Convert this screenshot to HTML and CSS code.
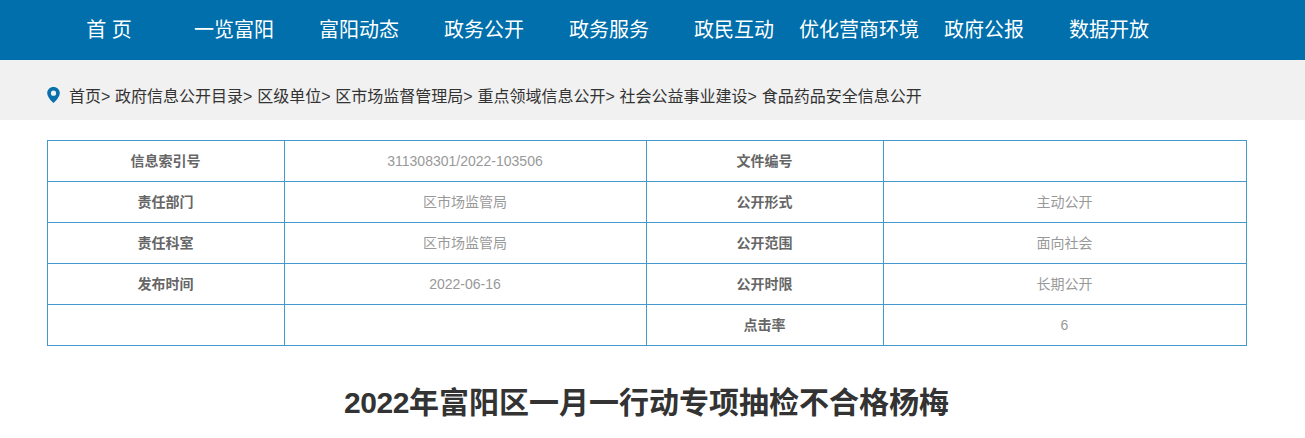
FILE: index.html
```html
<!DOCTYPE html>
<html lang="zh-CN">
<head>
<meta charset="utf-8">
<title>2022年富阳区一月一行动专项抽检不合格杨梅</title>
<link rel="stylesheet" href="styles.css">
</head>
<body>
<nav class="nav">
  <a class="nav-item">首&nbsp;页</a>
  <a class="nav-item">一览富阳</a>
  <a class="nav-item">富阳动态</a>
  <a class="nav-item">政务公开</a>
  <a class="nav-item">政务服务</a>
  <a class="nav-item">政民互动</a>
  <a class="nav-item">优化营商环境</a>
  <a class="nav-item">政府公报</a>
  <a class="nav-item">数据开放</a>
</nav>
<div class="crumbs">
  <svg class="pin" width="13" height="16" viewBox="0 0 13 16"><path fill="#0a70ab" fill-rule="evenodd" d="M6.500 0C2.900 0 .2 2.700.2 6.100c0 3.600 3.600 7.600 6.300 9.900 2.700-2.300 6.300-6.300 6.300-9.900C12.800 2.700 10.100 0 6.500 0zm0 3.600a2.600 2.600 0 1 1 0 5.200 2.600 2.600 0 0 1 0-5.200z"/></svg>
  <span class="crumb-text">首页&gt; 政府信息公开目录&gt; 区级单位&gt; 区市场监督管理局&gt; 重点领域信息公开&gt; 社会公益事业建设&gt; 食品药品安全信息公开</span>
</div>
<table class="info">
  <colgroup><col class="c1"><col class="c2"><col class="c3"><col class="c4"></colgroup>
  <tr><th>信息索引号</th><td class="num">311308301/2022-103506</td><th>文件编号</th><td></td></tr>
  <tr><th>责任部门</th><td>区市场监管局</td><th>公开形式</th><td>主动公开</td></tr>
  <tr><th>责任科室</th><td>区市场监管局</td><th>公开范围</th><td>面向社会</td></tr>
  <tr><th>发布时间</th><td class="num">2022-06-16</td><th>公开时限</th><td>长期公开</td></tr>
  <tr><th></th><td></td><th>点击率</th><td class="num">6</td></tr>
</table>
<h1 class="title"><span class="digits">2022</span>年富阳区一月一行动专项抽检不合格杨梅</h1>
</body>
</html>
```
FILE: styles.css
```css
* { box-sizing: border-box; }
html, body { margin: 0; padding: 0; height: 438px; overflow: hidden; }
body {
  background: #fff;
  font-family: "Liberation Sans", "Noto Sans CJK SC", sans-serif;
  color: #333;
}
.nav {
  display: flex;
  height: 60px;
  padding-left: 46.5px;
  background: #006fac;
}
.nav-item {
  width: 125px;
  line-height: 60px;
  text-align: center;
  font-size: 20px;
  color: #fff;
  white-space: nowrap;
}
.crumbs {
  display: flex;
  align-items: center;
  height: 60px;
  padding: 10px 0 0 47px;
  background: #f1f1f1;
}
.pin { flex: none; margin-right: 9px; }
.crumb-text { font-size: 16px; word-spacing: 0.33px; color: #333; white-space: nowrap; }
.info {
  width: 1199px;
  margin: 20px 0 0 47px;
  border-collapse: collapse;
  table-layout: fixed;
}
.c1, .c3 { width: 237px; }
.c2 { width: 362px; }
.c4 { width: 363px; }
.info th, .info td {
  height: 41px;
  padding: 0 1px 2px 0;
  border: 1px solid #4499cc;
  text-align: center;
  font-size: 14px;
}
.info th { color: #666; font-weight: bold; }
.info td { color: #999; font-weight: normal; }
.info td.num { padding-bottom: 0; }
.title {
  margin: 37px 12px 0 0;
  text-align: center;
  font-size: 30px;
  line-height: 40px;
  font-weight: bold;
  color: #333;
}
.digits { letter-spacing: -0.4px; }
```
